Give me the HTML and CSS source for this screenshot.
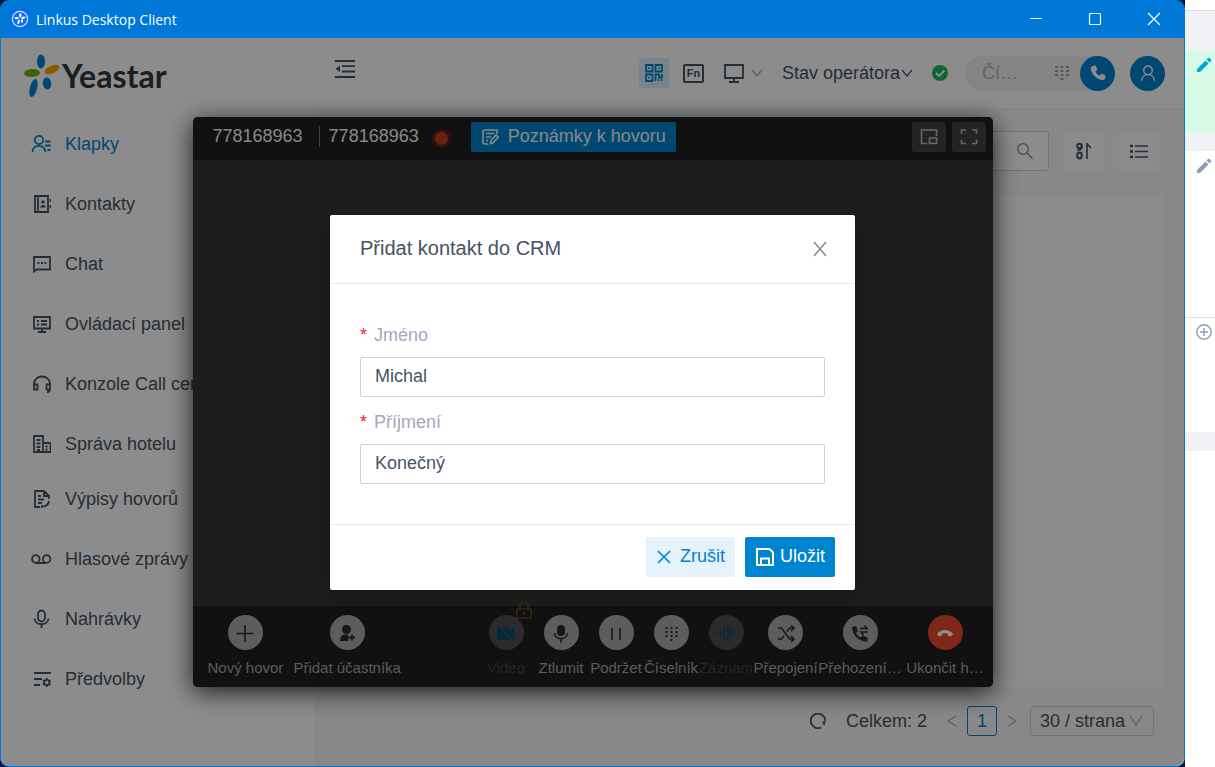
FILE: index.html
```html
<!DOCTYPE html>
<html lang="cs">
<head>
  <meta charset="UTF-8">
  <meta name="viewport" content="width=device-width, initial-scale=1.0">
  <title>Linkus Desktop Client</title>
  <link rel="stylesheet" href="styles.css">
</head>
<body>
  <div class="desktop">
    <div class="client">
      <header class="titlebar">
        <svg class="app-icon" viewBox="0 0 20 20">
          <rect width="20" height="20" rx="3" fill="#0a6cf0"/>
          <circle cx="10" cy="10" r="7.6" fill="none" stroke="#d8e8ff" stroke-width="1.2"/>
          <g fill="#fff">
            <ellipse cx="10.3" cy="6.4" rx="1.2" ry="2.1"/>
            <ellipse cx="6.8" cy="9.2" rx="2.2" ry="1.1"/>
            <ellipse cx="13.3" cy="8.8" rx="2.2" ry="1.1" transform="rotate(-20 13.3 8.8)"/>
            <ellipse cx="8.6" cy="13" rx="1.1" ry="2.3" transform="rotate(15 8.6 13)"/>
            <ellipse cx="12" cy="12" rx="1.1" ry="1.8"/>
          </g>
        </svg>
        <span class="titlebar-name">Linkus Desktop Client</span>
        <div class="window-buttons">
          <button aria-label="Minimalizovat"><svg viewBox="0 0 14 14"><path d="M1 6.5h12"/></svg></button>
          <button aria-label="Maximalizovat"><svg viewBox="0 0 14 14"><rect x="1.5" y="1.5" width="11" height="11" rx="1"/></svg></button>
          <button aria-label="Zavřít"><svg viewBox="0 0 14 14"><path d="M1 1l12 12M13 1L1 13"/></svg></button>
        </div>
      </header>

      <div class="stage">
        <aside class="sidebar">
          <div class="logo">
            <svg viewBox="0 0 38 46">
              <ellipse cx="18" cy="8.5" rx="4" ry="7" fill="#0084d0"/>
              <ellipse cx="9" cy="20" rx="8" ry="4" fill="#6fb400" transform="rotate(-4 9 20)"/>
              <ellipse cx="29" cy="16.5" rx="8" ry="3.8" fill="#f5a800" transform="rotate(-24 29 16.5)"/>
              <ellipse cx="10.5" cy="35" rx="3.6" ry="9.300" fill="#0084d0" transform="rotate(14 10.5 35)"/>
              <ellipse cx="24" cy="30.5" rx="4.2" ry="6" fill="#0084d0" transform="rotate(-6 24 30.5)"/>
            </svg>
            <span>Yeastar</span>
          </div>
          <nav>
            <ul class="menu">
              <li><a href="#" class="active">
                <svg viewBox="0 0 20 20"><circle cx="8" cy="6" r="4.2"/><path d="M1.500 18c0-4 2.800-6.200 6.500-6.200S13.700 13.500 14.500 18M14 7.500h5.500M14 11.500h5.500M16.500 16h3"/></svg>
                Klapky</a></li>
              <li><a href="#">
                <svg viewBox="0 0 20 20"><path d="M4 2h13v16H4zM7 2v16M19.500 5v3M19.500 11v3"/><g class="fill"><circle cx="12" cy="8" r="1.700"/><path d="M9.200 13.500c0-3.300 5.600-3.300 5.600 0z"/></g></svg>
                Kontakty</a></li>
              <li><a href="#">
                <svg viewBox="0 0 20 20"><path d="M3 3h16v12.500H5.500L3 17.500z"/><path d="M6.500 9h2M10 9h2M13.500 9h2" stroke-width="2"/></svg>
                Chat</a></li>
              <li><a href="#">
                <svg viewBox="0 0 20 20"><path d="M3 3h16v11.500H3zM11 14v4M7 18h8M6 7h2M10 7h6M6 10.500h2M10 10.500h6"/></svg>
                Ovládací panel</a></li>
              <li><a href="#">
                <svg viewBox="0 0 20 20"><path d="M3 15V10a8 7.500 0 0 1 16 0v5M3 10.500h3.500v5H3zM15.500 10.500H19v5h-3.500zM19 15c0 2-1 3-3 3"/></svg>
                Konzole Call centra</a></li>
              <li><a href="#">
                <svg viewBox="0 0 20 20"><path d="M3 2h9v16H3zM12 9h7.500v9H12M5.500 6h4M5.500 9.500h4M5.500 13h4M6 16h3M14.500 12.500h2M14.500 15.500h2"/></svg>
                Správa hotelu</a></li>
            </ul>
            <ul class="menu">
              <li><a href="#">
                <svg viewBox="0 0 20 20"><path d="M9 18H4V2h9l5 5M13 2v5h5v3M7 7h3M7 10.500h6M7 14h4M18 12c-.5 3-3 5-5.500 5.500M11 16v3"/></svg>
                Výpisy hovorů</a></li>
              <li><a href="#">
                <svg viewBox="0 0 20 20"><circle cx="4.800" cy="10" r="3.800"/><circle cx="15.600" cy="10" r="3.800"/><path d="M4.800 14h10.800"/></svg>
                Hlasové zprávy</a></li>
              <li><a href="#">
                <svg viewBox="0 0 20 20"><rect x="7" y="1.500" width="7" height="11" rx="3.500"/><path d="M3.500 9.500c.5 7.500 13.500 7.500 14 0M10.500 15v4"/></svg>
                Nahrávky</a></li>
              <li><a href="#">
                <svg viewBox="0 0 20 20"><path d="M3 4h17M3 10h8M3 16h6"/><circle cx="15.800" cy="13.500" r="2.700"/><path d="M15.800 9v2M15.800 16v2M12 11.300l1.600 1M18 14.700l1.600 1M12 15.700l1.600-1M18 12.300l1.600-1"/></svg>
                Předvolby</a></li>
            </ul>
          </nav>
        </aside>

        <main>
          <div class="topbar">
            <button class="icon-btn collapse" aria-label="Sbalit menu">
              <svg viewBox="0 0 20 20"><path d="M0 2h20M7 7.200h13M7 12.500h13M0 18h20"/><path class="fill" d="M5 6.500v6.500L.5 9.800z"/></svg>
            </button>
            <div class="topbar-tools">
              <button class="icon-btn qr" aria-label="QR kód">
                <svg viewBox="0 0 20 20"><path d="M2 2h6.500v6.500H2zM11.500 2H18v6.500h-6.500zM2 11.500h6.500V18H2zM5 4.500v1.500M15 4.500v1.500M5 14v1.500M11.500 18v-6.500H15v3h3v-3.500M14 17h1.500M17 17h1.500"/></svg>
              </button>
              <button class="icon-btn fn">Fn</button>
              <button class="icon-btn screen" aria-label="Obrazovka">
                <svg viewBox="0 0 20 20"><path d="M1 2h18v13H1zM10 15v4M5 19h10"/></svg>
                <svg class="chevron pale" viewBox="0 0 10 10"><path d="M0 2l5 6 5-6"/></svg>
              </button>
              <button class="icon-btn operator">Stav operátora<svg class="chevron" viewBox="0 0 10 10"><path d="M0 2l5 6 5-6"/></svg></button>
              <svg class="status" viewBox="0 0 16 16"><circle cx="8" cy="8" r="8" fill="#1cb85b"/><path d="M4 8l3 3 5.500-5.500" fill="none" stroke="#fff" stroke-width="1.800"/></svg>
              <div class="dialer">
                <input type="text" placeholder="Čí…" aria-label="Číslo">
                <svg class="keypad" viewBox="0 0 14 16"><path d="M0 2h3M5.500 2h3M11 2h3M0 6h3M5.500 6h3M11 6h3M0 10h3M5.500 10h3M11 10h3M5.500 14h3"/></svg>
                <button class="round-btn" aria-label="Volat">
                  <svg viewBox="0 0 20 20"><path fill="#fff" d="M4.500 2L7.500 1.800l1.800 4.600-2.200 2c.9 2.200 2.400 3.600 4.600 4.500l2-2.200 4.600 1.800-.2 3c-.2 1.800-1.900 2.600-3.400 2.300C8 16.500 3.300 11.800 2 5.500 1.800 3.900 2.900 2.300 4.500 2z"/></svg>
                </button>
              </div>
              <button class="round-btn" aria-label="Profil">
                <svg viewBox="0 0 20 20"><g fill="none" stroke="#fff" stroke-width="1.600"><circle cx="10" cy="7" r="4.800"/><path d="M3 18.500c.3-9 13.700-9 14 0"/></g></svg>
              </button>
            </div>
          </div>

          <section class="content">
            <div class="toolbar">
              <label class="search">
                <input type="text" aria-label="Hledat">
                <svg viewBox="0 0 16 16"><circle cx="6" cy="6" r="5.300"/><path d="M10 10l5.500 5.500"/></svg>
              </label>
              <button class="tool" aria-label="Řazení">
                <svg viewBox="0 0 18 18"><g stroke-width="2"><circle cx="4.500" cy="4" r="2.300"/><path d="M6.800 4c0 3-1 4-4.300 4"/><ellipse cx="4.500" cy="13.500" rx="2.300" ry="3"/></g><path d="M12 17V2l4 4"/></svg>
              </button>
              <button class="tool" aria-label="Seznam">
                <svg viewBox="0 0 18 18"><path d="M5 4h13M5 9.500h13M5 15h13"/><path d="M0 4h3M0 9.500h3M0 15h3" stroke-width="2.500"/></svg>
              </button>
            </div>
            <div class="table-area"></div>
            <div class="pagination">
              <button class="icon-btn" aria-label="Obnovit"><svg class="refresh" viewBox="0 0 16 16"><path d="M11 14.500A7.300 7.300 0 1 1 15.300 8"/><path class="fill" d="M12 8.500h4l-2 4.500z"/></svg></button>
              <span class="total">Celkem: 2</span>
              <button class="icon-btn" aria-label="Předchozí"><svg class="chevron pale" viewBox="0 0 10 12"><path d="M9 1L1 6l8 5"/></svg></button>
              <button class="page-number">1</button>
              <button class="icon-btn" aria-label="Další"><svg class="chevron pale" viewBox="0 0 10 12"><path d="M1 1l8 5-8 5"/></svg></button>
              <div class="page-size">
                <select aria-label="Počet na stranu"><option>30 / strana</option></select>
                <svg class="chevron pale" viewBox="0 0 12 10"><path d="M0 0l6 9 6-9"/></svg>
              </div>
            </div>
          </section>
        </main>

        <div class="layer">
          <section class="call">
            <div class="call-head">
              <span class="caller">778168963</span>
              <span class="caller second">778168963</span>
              <span class="record-dot"></span>
              <button class="notes">
                <svg viewBox="0 0 18 18"><path d="M7 16H4a2 2 0 0 1-2-2V4a2 2 0 0 1 2-2h12v4M2 2v3M5 5.500h8M5 9h5M5 12.500h2M9.500 15.500l.5-3L15 7l2.200 2.200-5 5.500z"/></svg>
                Poznámky k hovoru
              </button>
              <div class="call-head-tools">
                <button aria-label="Minimalizovat hovor"><svg viewBox="0 0 18 18"><path d="M7 15.500H1.500V2h15v6M9.500 10h7v5.500h-7z"/></svg></button>
                <button aria-label="Celá obrazovka"><svg viewBox="0 0 18 18"><path d="M1.500 6V2H6M12 2h4.500v4M16.500 11.500v4H12M6 15.500H1.500v-4"/></svg></button>
              </div>
            </div>
            <div class="call-body"></div>
            <div class="call-foot">
              <div class="call-group">
                <button class="call-item wide"><i><svg viewBox="0 0 20 20"><path d="M10 2v17M1.500 10.500h17"/></svg></i><span>Nový hovor</span></button>
                <button class="call-item wide"><i><svg viewBox="0 0 20 20"><g class="fill"><circle cx="9.500" cy="6.500" r="4.500"/><path d="M3 18c0-7 6-7.500 8.500-5.500V18z"/></g><path d="M15 11.500v6M12 14.500h6" stroke-width="2"/></svg></i><span>Přidat účastníka</span></button>
              </div>
              <div class="call-group">
                <button class="call-item off"><i><svg class="blue" viewBox="0 0 20 20"><path class="fill" d="M1 4h13v4l4-3v12l-4-3v3H1z"/><path class="slash" d="M2 3l16 15"/></svg><svg class="lock" viewBox="0 0 16 18"><path d="M1 8h14v9H1zM4 8V5c0-5 8-5 8 0v3M8 11v3"/></svg></i><span>Video</span></button>
                <button class="call-item"><i><svg viewBox="0 0 20 20"><rect class="fill" x="6" y="2" width="8" height="11" rx="4"/><path d="M3.500 10c.5 7.500 12.500 7.500 13 0M10 15.500v4"/></svg></i><span>Ztlumit</span></button>
                <button class="call-item"><i><svg viewBox="0 0 20 20"><path d="M6 5v12M14 5v12"/></svg></i><span>Podržet</span></button>
                <button class="call-item"><i><svg viewBox="0 0 20 20"><path d="M4.500 5h2M9.500 5h2M14.500 5h2M4.500 9h2M9.500 9h2M14.500 9h2M4.500 13h2M9.500 13h2M14.500 13h2M9.500 17h2" stroke-width="2"/></svg></i><span>Číselník</span></button>
                <button class="call-item off"><i><svg class="blue" viewBox="0 0 20 20"><path d="M1.500 9v3M5 6.500v8M8.500 4v13M12 2v17M15.500 6v9M18.500 9v3"/></svg></i><span>Záznam</span></button>
                <button class="call-item transfer"><i><svg viewBox="0 0 20 20"><path d="M2 5h3.500l8 11H18M2 16h3.500l2.500-3M11 8.500L13.500 5H18M15 2.500L18 5l-3 3M15 13l3 3-3 3"/></svg></i><span>Přepojení</span></button>
                <button class="call-item long"><i><svg viewBox="0 0 20 20"><path class="fill" d="M2 4l4-1 2 5-2 2c1 2 2.500 3.500 4.500 4.500l2-2 5 2v4C9 19 2 12 2 4z"/><path d="M10 5.500h7l-2.500-3M18 9h-7l2.500 3"/></svg></i><span>Přehození…</span></button>
                <button class="call-item long end"><i><svg viewBox="0 0 20 20"><path class="fill" d="M2 11.500C4 5.500 16 5.500 18 11.500l-2.500 2-2.800-1.200-.3-1.800c-1.500-.5-3.300-.5-4.800 0l-.3 1.800-2.800 1.200z"/></svg></i><span>Ukončit h…</span></button>
              </div>
            </div>
          </section>
        </div>

        <div class="mask"></div>

        <div class="layer">
          <form class="modal" role="dialog" aria-labelledby="modalTitle">
            <div class="modal-head">
              <h2 id="modalTitle">Přidat kontakt do CRM</h2>
              <button type="button" class="modal-close" aria-label="Zavřít"><svg viewBox="0 0 16 16"><path d="M2 1l12 14M14 1L2 15"/></svg></button>
            </div>
            <div class="modal-body">
              <div class="field">
                <label for="firstName">Jméno</label>
                <input type="text" id="firstName" value="Michal">
              </div>
              <div class="field">
                <label for="lastName">Příjmení</label>
                <input type="text" id="lastName" value="Konečný">
              </div>
            </div>
            <div class="modal-foot">
              <button type="button" class="btn cancel"><svg viewBox="0 0 16 16"><path d="M2 2l12 12M14 2L2 14"/></svg>Zrušit</button>
              <button type="button" class="btn save"><svg viewBox="0 0 20 20"><path d="M2 2h12.500L18 5.500V18H2zM6 18v-6.500h8V18"/></svg>Uložit</button>
            </div>
          </form>
        </div>
      </div>
    </div>

    <div class="behind">
      <div class="strip top"></div>
      <div class="strip gray tall"></div>
      <div class="strip green"><svg viewBox="0 0 16 16"><path d="M1 12l8.500-8.500 3 3L4 15H1zM10.500 2.500l1.500-1.500q.7-.7 1.400 0l1.600 1.600q.7.700 0 1.400L13.500 5.500z"/></svg></div>
      <div class="strip gray"></div>
      <div class="strip edit"><svg viewBox="0 0 16 16"><path d="M1 12l8.500-8.500 3 3L4 15H1zM10.500 2.500l1.500-1.500q.7-.7 1.400 0l1.600 1.600q.7.700 0 1.400L13.500 5.500z"/></svg></div>
      <div class="strip add"><svg viewBox="0 0 16 16"><g fill="none" stroke="#909cb8" stroke-width="1.500"><circle cx="8" cy="8" r="7.200"/><path d="M8 4v8M4 8h8"/></g></svg></div>
      <div class="strip gray"></div>
    </div>
  </div>
</body>
</html>
```
FILE: styles.css
```css
* {
  margin: 0;
  padding: 0;
  box-sizing: border-box;
}

body {
  font-family: "Liberation Sans", Arial, sans-serif;
  font-size: 18px;
  color: #445464;
}

button,
input,
select {
  font: inherit;
  color: inherit;
  border: none;
  background: none;
  outline: none;
}

button {
  cursor: pointer;
}

svg {
  display: block;
  flex: none;
  fill: none;
  stroke: currentColor;
  stroke-width: 1.6;
}

svg .fill {
  fill: currentColor;
  stroke: none;
}

.desktop {
  display: flex;
  min-height: 100vh;
  background: #061440;
}

/* Client window */
.client {
  flex: 1;
  min-width: 0;
  display: flex;
  flex-direction: column;
  border: 1px solid #0078d7;
  border-top: none;
  border-radius: 9px;
  overflow: hidden;
  background: #0078d7;
}

.titlebar {
  display: flex;
  align-items: center;
  height: 38px;
  padding: 0 1px 0 9px;
  color: #fff;
  font-family: "Open Sans", "Noto Sans", sans-serif;
  font-size: 14px;
}

.app-icon {
  width: 20px;
  height: 20px;
  margin-right: 6px;
  stroke: none;
}

.window-buttons {
  display: flex;
  margin-left: auto;
}

.window-buttons button {
  width: 59px;
  height: 38px;
  display: flex;
  align-items: center;
  justify-content: center;
}

.window-buttons svg {
  width: 14px;
  height: 14px;
  stroke-width: 1.2;
}

.stage {
  position: relative;
  flex: 1;
  display: flex;
  background: #fff;
}

/* Sidebar */
.sidebar {
  width: 313px;
  flex: none;
}

.logo {
  display: flex;
  align-items: center;
  gap: 1px;
  padding: 15px 22px 0;
  color: #2d3b42;
  font-family: Lato, sans-serif;
  font-size: 32px;
  font-weight: 700;
  line-height: 46px;
}

.logo svg {
  width: 38px;
  height: 46px;
  stroke: none;
}

nav {
  display: flex;
  flex-direction: column;
  gap: 15px;
  padding: 25px 30px;
}

.menu {
  display: flex;
  flex-direction: column;
  gap: 20px;
  list-style: none;
}

.menu a {
  display: flex;
  align-items: center;
  gap: 14px;
  height: 40px;
  color: #445464;
  text-decoration: none;
}

.menu a.active {
  color: #0084d0;
}

.menu svg {
  width: 20px;
  height: 20px;
  stroke-width: 1.8;
}

/* Top bar */
main {
  flex: 1;
  min-width: 0;
  display: flex;
  flex-direction: column;
}

.topbar {
  display: flex;
  align-items: center;
  justify-content: space-between;
  height: 71px;
  padding: 0 19px 0 21px;
  border-bottom: 1px solid #ebedf2;
}

.topbar-tools {
  display: flex;
  align-items: center;
}

.icon-btn {
  display: flex;
  align-items: center;
}

.icon-btn svg {
  width: 20px;
  height: 20px;
  stroke-width: 1.8;
}

.collapse {
  margin-bottom: 8px;
}

.icon-btn .chevron,
.chevron {
  width: 10px;
  height: 10px;
  stroke-width: 1.2;
}

.chevron.pale {
  color: #a8aab0;
}

.qr {
  width: 30px;
  height: 30px;
  justify-content: center;
  border-radius: 4px;
  background: #daf0f7;
  color: #0084d0;
}

.fn {
  width: 21px;
  height: 19px;
  margin: 0 20px 0 14px;
  justify-content: center;
  border: 2px solid #445464;
  border-radius: 2px;
  font-size: 11px;
  font-weight: 700;
}

.screen {
  gap: 8px;
  margin-right: 20px;
}

.operator {
  gap: 2px;
  margin-right: 20px;
}

.status {
  width: 16px;
  height: 16px;
  margin-right: 17px;
  stroke: none;
}

.dialer {
  display: flex;
  align-items: center;
  width: 150px;
  height: 35px;
  margin-right: 15px;
  padding-left: 17px;
  border-radius: 18px;
  background: #f1f1f3;
}

.dialer input {
  width: 40px;
  flex: 1;
}

.dialer input::placeholder {
  color: #b2b4bb;
  opacity: 1;
}

.keypad {
  width: 14px;
  height: 16px;
  margin-right: 11px;
  color: #a0a3ab;
  stroke-width: 2;
}

.round-btn {
  display: flex;
  align-items: center;
  justify-content: center;
  flex: none;
  width: 35px;
  height: 35px;
  border-radius: 50%;
  background: #0084d0;
}

.round-btn svg {
  width: 18px;
  height: 18px;
  stroke: none;
}

/* Content */
.content {
  flex: 1;
  display: flex;
  flex-direction: column;
  padding: 22px 20px 30px;
  background: #f7f8f9;
}

.toolbar {
  display: flex;
  justify-content: flex-end;
  gap: 15px;
  padding: 0 5px 24px;
}

.search {
  display: flex;
  align-items: center;
  width: 250px;
  height: 40px;
  padding: 0 15px;
  border: 1px solid #cfd1dc;
  border-radius: 3px;
  background: #fff;
  color: #8a8c92;
}

.search input {
  flex: 1;
  min-width: 0;
}

.search svg {
  width: 16px;
  height: 16px;
  stroke-width: 1.3;
}

.tool {
  display: flex;
  align-items: center;
  justify-content: center;
  width: 40px;
  height: 40px;
  border-radius: 3px;
  background: #fdfdfd;
}

.tool svg {
  width: 18px;
  height: 18px;
}

.table-area {
  flex: 1;
  background: #fdfdfd;
}

.pagination {
  display: flex;
  align-items: center;
  justify-content: flex-end;
  gap: 10px;
  padding: 19px 10px 0;
}

.pagination .total {
  margin: 0 10px;
}

.pagination .chevron {
  height: 12px;
}

.icon-btn .refresh {
  width: 16px;
  height: 16px;
}

.page-number {
  width: 30px;
  height: 30px;
  border: 1px solid #0084d0;
  border-radius: 3px;
  color: #0084d0;
}

.page-size {
  display: flex;
  align-items: center;
  width: 124px;
  height: 30px;
  margin-left: 3px;
  padding: 0 11px 0 9px;
  border: 1px solid #cfd1dc;
  border-radius: 3px;
}

.page-size select {
  flex: 1;
  min-width: 0;
  appearance: none;
}

.page-size .chevron {
  width: 12px;
}

/* Call window */
.layer {
  position: absolute;
  inset: 0;
  display: flex;
  align-items: center;
  justify-content: center;
}

.mask {
  position: absolute;
  inset: 0;
  background: rgba(0, 0, 0, 0.45);
}

.call {
  display: flex;
  flex-direction: column;
  width: 800px;
  border-radius: 5px;
  overflow: hidden;
  background: #353535;
  box-shadow: 0 5px 25px rgba(0, 0, 0, 0.8);
}

.call-head {
  display: flex;
  align-items: center;
  height: 43px;
  padding: 0 7px 4px 20px;
  background: #1f1f1f;
  color: #f5f5f5;
}

.caller.second {
  margin-left: 16px;
  padding-left: 9px;
  border-left: 1px solid #777;
}

.record-dot {
  width: 19px;
  height: 19px;
  margin: 4px 20px 0 13px;
  border: 3px solid #5a241b;
  border-radius: 50%;
  background: #c13c22;
}

.notes {
  display: flex;
  align-items: center;
  gap: 9px;
  height: 30px;
  padding: 0 10px;
  border-radius: 2px;
  background: #0084d0;
}

.notes svg {
  width: 18px;
  height: 18px;
}

.call-head-tools {
  display: flex;
  gap: 6px;
  margin-left: auto;
}

.call-head-tools button {
  display: flex;
  align-items: center;
  justify-content: center;
  width: 34px;
  height: 30px;
  border-radius: 3px;
  background: #424242;
  color: #bdbdbd;
}

.call-head-tools svg {
  width: 18px;
  height: 18px;
}

.call-body {
  height: 446px;
}

.call-foot {
  display: flex;
  justify-content: space-between;
  height: 81px;
  padding: 9px 5px 0 15px;
  background: #1f1f1f;
  color: #a6a6a6;
  font-size: 15px;
}

.call-group {
  display: flex;
  align-items: flex-start;
}

.call-item {
  display: flex;
  flex-direction: column;
  align-items: center;
  gap: 9px;
  width: 55px;
  white-space: nowrap;
}

.call-item.wide {
  width: auto;
  margin-right: 10px;
}

.call-item.transfer {
  width: 64px;
}

.call-item.long {
  width: 85px;
}

.call-item span {
  line-height: 18px;
}

.call-item i {
  position: relative;
  display: flex;
  align-items: center;
  justify-content: center;
  width: 35px;
  height: 35px;
  border-radius: 50%;
  background: #a9a9a9;
  color: #2a2a2a;
}

.call-item svg {
  width: 20px;
  height: 20px;
}

.call-item.off {
  color: #454545;
}

.call-item.off i {
  background: #4f4f4f;
}

.call-item .blue {
  color: #0a4a72;
}

.call-item .slash {
  stroke: #4f4f4f;
}

.call-item .lock {
  position: absolute;
  top: -14px;
  right: -8px;
  width: 16px;
  height: 18px;
  color: #5f4a1c;
}

.call-item.end i {
  background: #e8492f;
  color: #fff;
}

/* CRM dialog */
.modal {
  width: 525px;
  border-radius: 2px;
  background: #fff;
  box-shadow: 0 5px 15px rgba(0, 0, 0, 0.2);
}

.modal-head {
  display: flex;
  align-items: center;
  justify-content: space-between;
  height: 69px;
  padding: 0 27px 0 30px;
  border-bottom: 1px solid #e6e9f0;
}

.modal-head h2 {
  font-size: 20px;
  font-weight: 400;
}

.modal-close {
  color: #8c8c8c;
}

.modal-close svg {
  width: 16px;
  height: 16px;
}

.modal-body {
  display: flex;
  flex-direction: column;
  gap: 15px;
  padding: 41px 30px 40px;
}

.field {
  display: flex;
  flex-direction: column;
  gap: 12px;
}

.field label {
  display: flex;
  gap: 7px;
  line-height: 20px;
  color: #a5a7bd;
}

.field label::before {
  content: "*";
  color: #f5222d;
}

.field input {
  height: 40px;
  padding: 0 14px;
  border: 1px solid #d0d1df;
  border-radius: 2px;
}

.modal-foot {
  display: flex;
  justify-content: flex-end;
  gap: 10px;
  padding: 12px 20px 13px;
  border-top: 1px solid #e6e9f0;
}

.btn {
  display: flex;
  align-items: center;
  justify-content: center;
  height: 40px;
  padding: 0 10px;
  border-radius: 2px;
  gap: 5px;
}

.btn svg {
  width: 20px;
  height: 20px;
}

.cancel {
  gap: 8px;
  background: #e5f2fa;
  color: #0084d0;
}

.cancel svg {
  width: 16px;
  height: 16px;
}

.save {
  background: #0084d0;
  color: #fff;
}

.save svg {
  stroke-width: 2;
}

/* Page visible behind the client */
.behind {
  display: flex;
  flex-direction: column;
  width: 30px;
  flex: none;
  background: #fff;
}

.strip {
  padding: 7px 11px;
}

.strip svg {
  width: 16px;
  height: 16px;
  fill: #929db5;
  stroke: none;
}

.strip.top {
  height: 11px;
  padding: 0;
  border-bottom: 1px solid #dcdde0;
}

.strip.gray {
  height: 19px;
  background: #f1f2f5;
}

.strip.gray.tall {
  height: 39px;
}

.strip.green {
  height: 82px;
  background: #d7fbe6;
}

.strip.green svg {
  fill: #00a6cf;
}

.strip.edit {
  height: 166px;
}

.strip.add {
  height: 115px;
  padding-top: 6px;
  border-top: 1px solid #dcdde0;
}
```
